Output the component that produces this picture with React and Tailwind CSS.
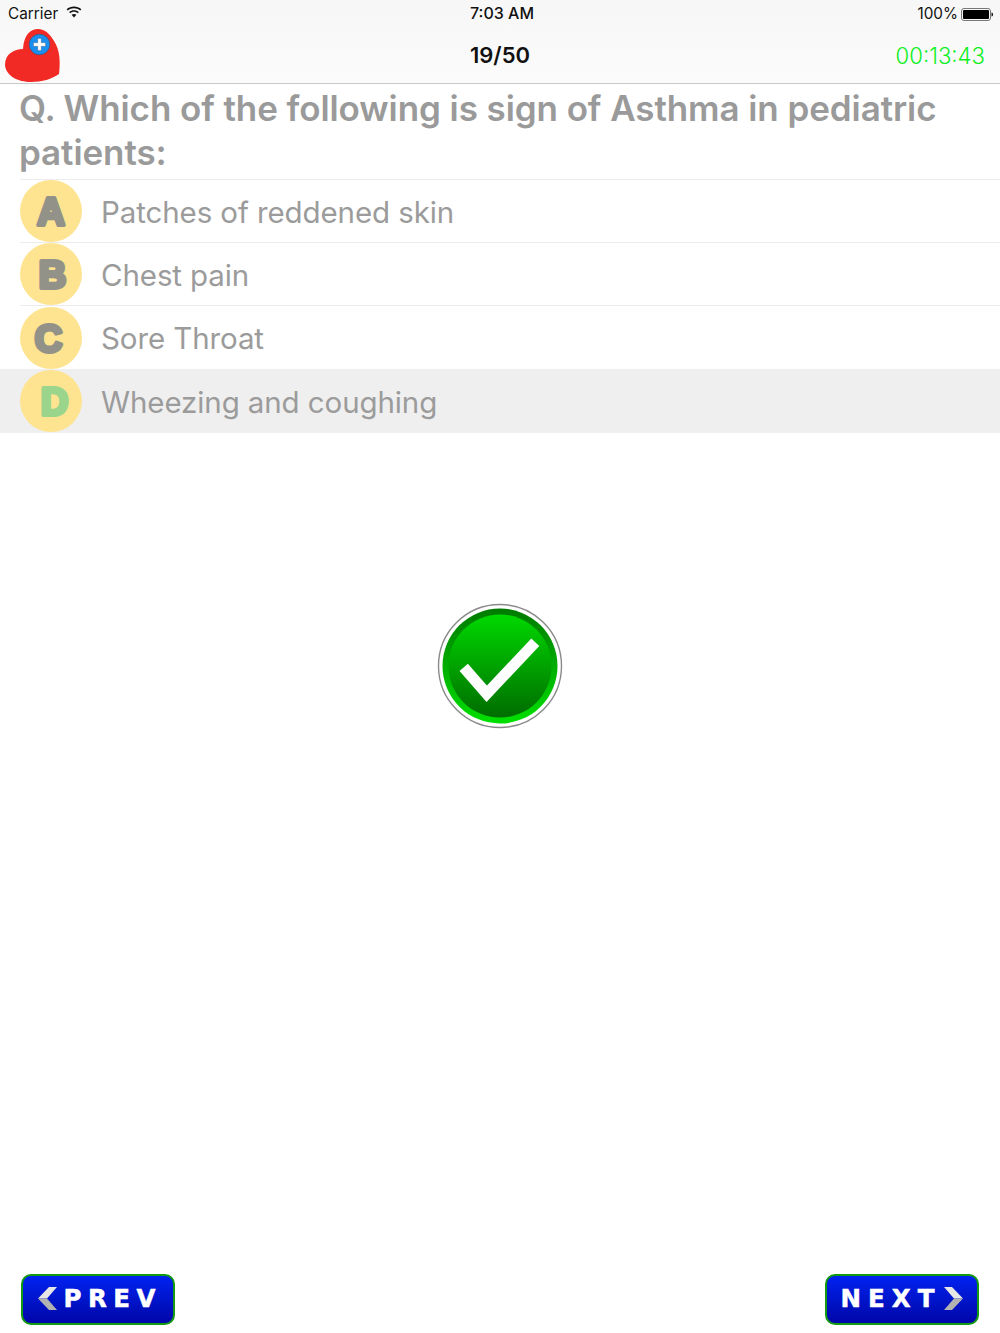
const rows = [
  { l: "A", t: "Patches of reddened skin", x: 31, f: "#929289", h: "h-[63px]" },
  { l: "B", t: "Chest pain", x: 32.5, f: "#929289", h: "h-[63px]" },
  { l: "C", t: "Sore Throat", x: 28.5, f: "#929289", h: "h-[64px]" },
  { l: "D", t: "Wheezing and coughing", x: 34.5, f: "#9bd58c", h: "h-[64px]", on: true },
];

function Heart() {
  return (
    <svg width="66" height="60" viewBox="0 27 66 60" className="absolute left-0 top-[27px]">
      <path d="M59 74C60.5 62 60 50 54 41C50 34 45 29 38 29C30 29 24 35 23 49C14 49 5 54 5 65C6 76 18 82 31 82C42 82 52 79 59 74Z" fill="#f22a26" />
      <circle cx="39.5" cy="44.5" r="10.3" fill="#1b8ff0" stroke="#2a5a86" strokeWidth="0.7" />
      <path d="M37.8 38.5h3.4v4.3h4.3v3.4h-4.3v4.3h-3.4v-4.3h-4.3v-3.4h4.3z" fill="#fff" stroke="#444" strokeWidth="0.3" />
    </svg>
  );
}

function Check() {
  return (
    <svg width="126" height="126" viewBox="0 0 126 126" className="absolute left-[437px] top-[603px]">
      <defs>
        <linearGradient id="out" x1="0" y1="0" x2="0" y2="1">
          <stop offset="0" stopColor="#007a00" />
          <stop offset="1" stopColor="#00e000" />
        </linearGradient>
        <linearGradient id="inn" x1="0" y1="0" x2="0" y2="1">
          <stop offset="0" stopColor="#00d800" />
          <stop offset="1" stopColor="#006c00" />
        </linearGradient>
      </defs>
      <circle cx="63" cy="63" r="61.5" fill="#fff" stroke="#8a8a8a" strokeWidth="1.4" />
      <circle cx="63" cy="63" r="57.5" fill="url(#out)" />
      <circle cx="63" cy="63" r="51.5" fill="url(#inn)" />
      <path d="M26.7 64.3L49.7 90.7L98.3 39.3" fill="none" stroke="#fff" strokeWidth="11" strokeLinecap="butt" strokeLinejoin="miter" />
    </svg>
  );
}

function Btn({ label, dir }) {
  const prev = dir === "prev";
  const chevron = (
    <svg width="19" height="23" viewBox="0 0 19 23" className="shrink-0">
      <path d={prev ? "M11 0H19L9 11.5H0Z" : "M8 0H0L10 11.5H19Z"} fill="#e6e6e6" />
      <path d={prev ? "M0 11.5H9L19 23H11Z" : "M19 11.5H10L0 23H8Z"} fill="#b2b2b2" />
    </svg>
  );
  return (
    <div className={"flex h-[51px] w-[154px] items-center rounded-[10px] border-[2.5px] border-[#119a12] bg-gradient-to-b from-[#0022f0] to-[#0006a8] pb-[3px] " + (prev ? "gap-[7px] pl-[14.5px]" : "gap-[3px] pl-[13.5px]")}>
      {prev && chevron}
      <span className={"mt-[2px] font-['DejaVu_Sans',sans-serif] text-[24.5px] font-bold leading-none text-white [-webkit-text-stroke:0.5px_#fff] " + (prev ? "tracking-[6.5px]" : "tracking-[7px]")}>{label}</span>
      {!prev && chevron}
    </div>
  );
}

export default function App() {
  return (
    <div className="relative flex h-[1333px] w-[1000px] flex-col overflow-hidden bg-white font-['Inter','Liberation_Sans',sans-serif]">
      <header className="h-[84px] shrink-0 border-b border-[#c9c9c9] bg-gradient-to-b from-[#f7f7f7] to-[#fbfbfb]">
        <div className="relative flex h-[28px] items-center justify-between pl-2 pr-[7px] text-[15.3px] text-[#111]">
          <div className="flex items-center gap-[8px]">
            <span>Carrier</span>
            <svg width="16" height="12" viewBox="0 0 16 12" className="-mt-1">
              <path d="M8 11.5L5.6 8.8C7 7.6 9 7.6 10.4 8.8Z" fill="#111" />
              <path d="M4.2 7.2C6.4 5.2 9.6 5.2 11.8 7.2L12.9 6C10.1 3.5 5.9 3.5 3.1 6Z" fill="#111" />
              <path d="M1.8 4.6C5.3 1.5 10.7 1.5 14.2 4.6L15.4 3.3C11.2 -0.5 4.8 -0.5 0.6 3.3Z" fill="#111" />
            </svg>
          </div>
          <span className="absolute left-[470px] -mt-[2px] text-[16px] font-medium">7:03 AM</span>
          <div className="flex items-center gap-[3px]">
            <span>100%</span>
            <svg width="32" height="13" viewBox="0 0 32 13">
              <rect x="0.5" y="0.5" width="29" height="12" rx="2.5" fill="none" stroke="#777" />
              <rect x="2" y="2" width="26" height="9" rx="1" fill="#000" />
              <path d="M30.5 4.5c1 0 1.5.8 1.5 2s-.5 2-1.5 2z" fill="#111" />
            </svg>
          </div>
        </div>
        <div className="relative flex h-[55px] items-center justify-center">
          <span className="text-[22px] font-semibold text-[#111]">19/50</span>
          <span className="absolute right-[15px] text-[22.2px] font-light text-[#0fef1f]">00:13:43</span>
        </div>
      </header>
      <Heart />

      <main className="flex-1">
        <h1 className="pb-[5px] pl-[19px] pr-5 pt-[2px] text-[35px] font-semibold leading-[44px] tracking-[-0.08px] text-[#9a9a9a]">
          Q. Which of the following is sign of Asthma in pediatric patients:
        </h1>
        <ul>
          {rows.map((r) => (
            <li key={r.l} className={r.h + " " + (r.on ? "bg-[#efefef]" : "")}>
              <div className={"ml-5 flex h-full items-center gap-[19px] " + (r.on ? "" : "border-t border-[#ececec]")}>
                <svg width="62" height="62" viewBox="0 0 62 62" className="shrink-0">
                  <circle cx="31" cy="31" r="31" fill="#fee490" />
                  <text
                    x={r.x}
                    y="45"
                    textAnchor="middle"
                    fontFamily="'Liberation Sans', sans-serif"
                    fontWeight="700"
                    fontSize="38"
                    fill={r.f}
                    stroke={r.f}
                    strokeWidth="4"
                    strokeLinejoin="round"
                  >
                    {r.l}
                  </text>
                </svg>
                <span className="mt-[3px] text-[29.5px] leading-none tracking-[-0.1px] text-[#9b9b9b]">{r.t}</span>
              </div>
            </li>
          ))}
        </ul>
      </main>

      <Check />

      <footer className="flex shrink-0 justify-between px-[21px] pb-2">
        <Btn label="PREV" dir="prev" />
        <Btn label="NEXT" dir="next" />
      </footer>
    </div>
  );
}
